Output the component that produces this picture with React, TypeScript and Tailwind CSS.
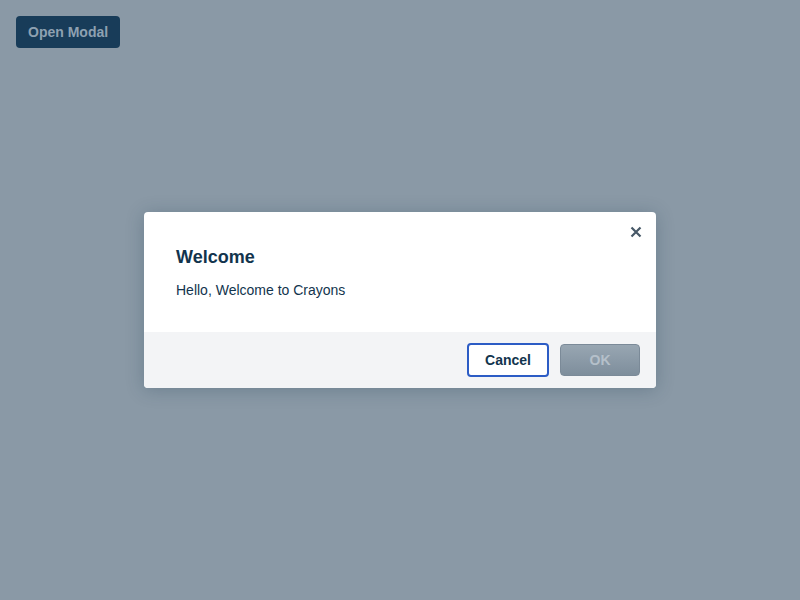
export default function App() {
  return (
    <div className="relative h-[600px] w-[800px] bg-[#8a99a6] font-['Liberation_Sans',Arial,sans-serif]">
      <div className="p-4">
        <button className="h-8 rounded-[4px] bg-[#183c59] px-3 text-[14px] font-bold text-[#8ea1b1]">
          Open Modal
        </button>
      </div>

      <div className="absolute inset-0 flex items-center justify-center">
        <div className="w-[512px] overflow-hidden rounded-[4px] bg-white shadow-[0_2px_18px_rgba(18,52,77,0.25)]">
          <div className="relative px-8 pb-8 pt-[33px]">
            <button className="absolute right-[14px] top-[14px] flex h-3 w-3 items-center justify-center text-[#475867]" aria-label="close">
              <svg width="12" height="12" viewBox="0 0 12 12" fill="none">
                <path d="M1.5 1.5l9 9M10.5 1.5l-9 9" stroke="currentColor" strokeWidth="2.2" strokeLinecap="butt" />
              </svg>
            </button>
            <h2 className="text-[18px] font-bold leading-6 text-[#12344d]">Welcome</h2>
            <p className="mt-[11px] text-[14px] leading-5 text-[#12344d]">Hello, Welcome to Crayons</p>
          </div>
          <div className="flex justify-end gap-[11px] bg-[#f3f4f6] px-4 py-[11px]">
            <button className="h-[34px] w-[82px] rounded-[4px] border-2 border-[#2c5cc5] bg-white text-[14px] font-bold text-[#12344d]">
              Cancel
            </button>
            <button className="mt-px h-8 w-20 rounded-[4px] border border-[#7b8a98] bg-gradient-to-b from-[#98a6b2] to-[#7e8e9c] text-[14px] font-bold text-[#b5c0ca]">
              OK
            </button>
          </div>
        </div>
      </div>
    </div>
  );
}
